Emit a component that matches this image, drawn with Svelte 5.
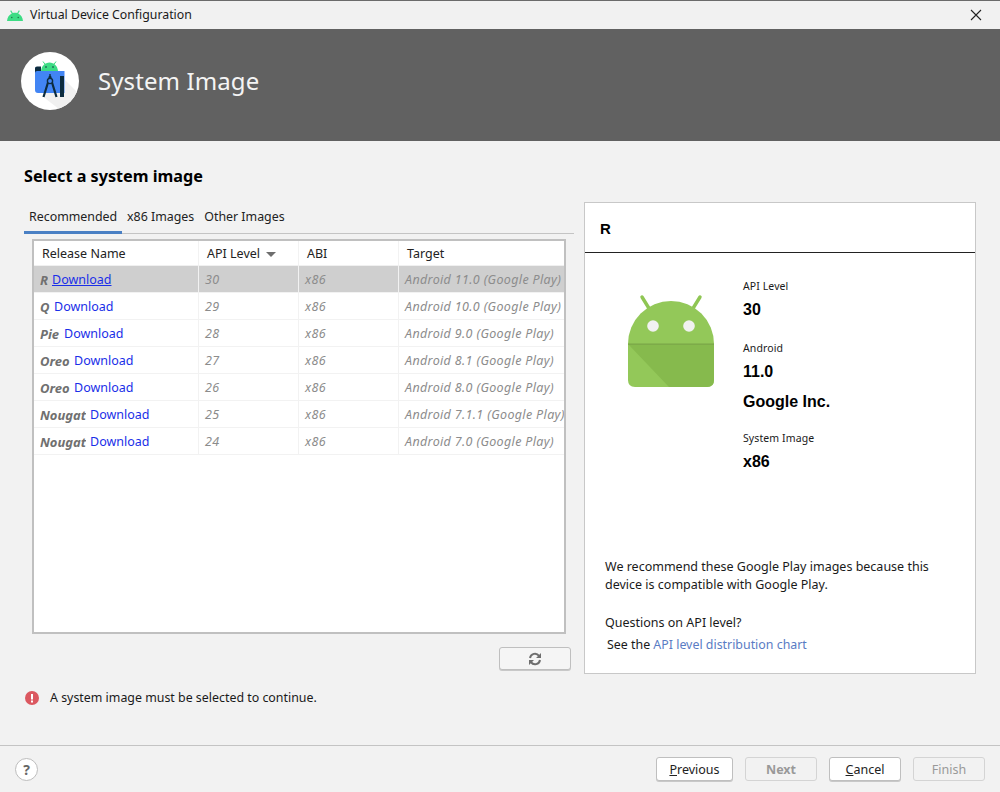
<script>
  const rows = [
    { name: 'R', w: 8, api: 30, target: 'Android 11.0 (Google Play)' },
    { name: 'Q', w: 10, api: 29, target: 'Android 10.0 (Google Play)' },
    { name: 'Pie', w: 20, api: 28, target: 'Android 9.0 (Google Play)' },
    { name: 'Oreo', w: 30, api: 27, target: 'Android 8.1 (Google Play)' },
    { name: 'Oreo', w: 30, api: 26, target: 'Android 8.0 (Google Play)' },
    { name: 'Nougat', w: 46, api: 25, target: 'Android 7.1.1 (Google Play)' },
    { name: 'Nougat', w: 46, api: 24, target: 'Android 7.0 (Google Play)' }
  ];
</script>

<div class="window">
  <header class="titlebar">
    <svg class="title-icon" width="16" height="11" viewBox="0 0 16 11">
      <path d="M0 11C0.300 7.400 2.200 4.700 4.800 3.500L3.200 0.900 4.100 0.300 5.800 3.100C7.200 2.600 8.800 2.600 10.200 3.100L11.900 0.300 12.800 0.900 11.200 3.500C13.800 4.700 15.700 7.400 16 11Z" fill="#3ddc84"/>
      <circle cx="4.800" cy="7.500" r="0.700" fill="#1c6b44"/>
      <circle cx="11.200" cy="7.500" r="0.700" fill="#1c6b44"/>
    </svg>
    <span class="title-text">Virtual Device Configuration</span>
    <svg class="close" width="12" height="12" viewBox="0 0 12 12">
      <path d="M1 1L11 11M11 1L1 11" stroke="#222" stroke-width="1.100" fill="none"/>
    </svg>
  </header>

  <section class="banner">
    <div class="logo">
      <svg width="58" height="58" viewBox="0 0 58 58">
        <path d="M43 27L58 42A29 29 0 0 1 38 57L21 44Z" fill="#f0f0f0"/>
        <path d="M20 19C20.500 14 24 10.500 28.500 10.500S36.500 14 37 19Z" fill="#3ddc84"/>
        <path d="M22 9.500L24.500 13M35 9.500L32.500 13" stroke="#3ddc84" stroke-width="1"/>
        <circle cx="25" cy="15" r="0.800" fill="#0d2c3f"/>
        <circle cx="32" cy="15" r="0.800" fill="#0d2c3f"/>
        <path d="M14 15.500H20V19H43.500V41H17Q14 41 14 38Z" fill="#4285f4"/>
        <path d="M14 16.500Q14 14.500 16 14.500H20V19H16Q14 19 14 21Z" fill="#0d2c3f"/>
        <rect x="39" y="24" width="4" height="21" fill="#0d2c3f"/>
        <path d="M29 24L22.500 45M29 24L35.500 45" stroke="#0d2c3f" stroke-width="2.200" fill="none"/>
        <circle cx="29" cy="29" r="2.600" fill="#4285f4" stroke="#0d2c3f" stroke-width="1.400"/>
        <path d="M29 22V26" stroke="#0d2c3f" stroke-width="1.400"/>
      </svg>
    </div>
    <h1>System Image</h1>
  </section>

  <main class="content">
    <h2>Select a system image</h2>
    <div class="columns">
      <div class="left">
        <div class="tabs">
          <span class="tab active">Recommended</span>
          <span class="tab">x86 Images</span>
          <span class="tab">Other Images</span>
        </div>
        <div class="table">
          <div class="row head">
            <div class="cell">Release Name</div>
            <div class="cell">API Level <i class="sort"></i></div>
            <div class="cell">ABI</div>
            <div class="cell">Target</div>
          </div>
          {#each rows as r, i}
            <div class="row" class:selected={i === 0}>
              <div class="cell name">
                <b class="release" style="width:{r.w}px">{r.name}</b>
                <span class="dl" class:under={i === 0}>Download</span>
              </div>
              <div class="cell em">{r.api}</div>
              <div class="cell em">x86</div>
              <div class="cell em target">{r.target}</div>
            </div>
          {/each}
        </div>
        <div class="refresh-line">
          <button class="btn refresh" aria-label="Refresh">
            <svg width="14" height="14" viewBox="0 0 14 14">
              <path d="M2 6A5 5 0 0 1 11 3.800M12 8A5 5 0 0 1 3 10.200" stroke="#6e6e6e" stroke-width="2" fill="none"/>
              <path d="M13 1V6H8ZM1 13V8H6Z" fill="#6e6e6e"/>
            </svg>
          </button>
        </div>
        <div class="error">
          <svg width="14" height="14" viewBox="0 0 14 14">
            <circle cx="7" cy="7" r="7" fill="#db5860"/>
            <rect x="6" y="3" width="2" height="5.500" fill="#fff"/>
            <rect x="6" y="9.500" width="2" height="2" fill="#fff"/>
          </svg>
          <span>A system image must be selected to continue.</span>
        </div>
      </div>

      <aside class="panel">
        <div class="panel-head">R</div>
        <div class="details">
          <svg class="android" width="87" height="94" viewBox="0 0 87 94">
            <path d="M14 3L22 16M72 3L64 16" stroke="#8fc653" stroke-width="3.400" stroke-linecap="round"/>
            <path d="M0 50A43 43 0 0 1 86 50V86Q86 93 79 93H7Q0 93 0 86Z" fill="#93c859"/>
            <path d="M0 50H86V86Q86 93 79 93H41Z" fill="#86ba4d"/>
            <rect x="0" y="49.500" width="86" height="1.200" fill="#7aa548"/>
            <circle cx="25" cy="32" r="5.800" fill="#f1f1f1"/>
            <circle cx="61" cy="32" r="5.800" fill="#f1f1f1"/>
          </svg>
          <div class="facts">
            <div class="label">API Level</div>
            <div class="value">30</div>
            <div class="label second">Android</div>
            <div class="value">11.0</div>
            <div class="value vendor">Google Inc.</div>
            <div class="label third">System Image</div>
            <div class="value">x86</div>
          </div>
        </div>
        <div class="notes">
          <p>We recommend these Google Play images because this device is compatible with Google Play.</p>
          <p class="q">Questions on API level?</p>
          <p class="see">See the <span class="link">API level distribution chart</span></p>
        </div>
      </aside>
    </div>
  </main>

  <footer class="footer">
    <div class="help">?</div>
    <div class="actions">
      <button class="btn action wide"><u>P</u>revious</button>
      <button class="btn action off bold">Next</button>
      <button class="btn action"><u>C</u>ancel</button>
      <button class="btn action off">Finish</button>
    </div>
  </footer>
</div>

<style>
  :global(body) {
    margin: 0;
    background: #f2f2f2;
  }
  .window {
    width: 1000px;
    height: 792px;
    display: flex;
    flex-direction: column;
    overflow: hidden;
    background: #f2f2f2;
    color: #1a1a1a;
    font: 13px/18px "Noto Sans", "Open Sans", sans-serif;
  }
  .titlebar {
    height: 28px;
    flex: none;
    display: flex;
    align-items: center;
    border-top: 1px solid #6b6b6b;
    padding: 0 18px 0 7px;
    background: #f1f1f1;
  }
  .title-icon { margin-right: 7px; }
  .title-text { font-size: 12.300px; }
  .close { margin-left: auto; }
  .banner {
    height: 112px;
    box-sizing: border-box;
    flex: none;
    background: #616161;
    display: flex;
    align-items: center;
    padding: 0 0 8px 21px;
  }
  .logo {
    width: 58px;
    height: 58px;
    border-radius: 50%;
    background: #fff;
    overflow: hidden;
    margin-right: 19px;
  }
  .logo svg { display: block; }
  h1 {
    margin: 0;
    font-size: 24px;
    font-weight: 400;
    line-height: 32px;
    color: #f4f4f4;
    letter-spacing: 0.100px;
  }
  .content {
    flex: 1;
    padding: 23px 24px 0;
  }
  h2 {
    margin: 0;
    font-size: 16.200px;
    line-height: 24px;
    font-weight: 700;
    color: #000;
  }
  .columns {
    display: flex;
    margin-top: 14px;
  }
  .left { width: 550px; margin-right: 10px; }
  .tabs {
    height: 33px;
    display: flex;
    border-bottom: 1px solid #c4c4c4;
    margin-top: -1px;
    box-sizing: border-box;
    padding-top: 7px;
    font-size: 12.400px;
  }
  .tab {
    padding: 0 5px;
    height: 25px;
    box-sizing: border-box;
    color: #222;
  }
  .tab.active {
    width: 98px;
    border-bottom: 3px solid #4a80c4;
    height: 26px;
    padding-right: 0;
    white-space: nowrap;
  }
  .table {
    width: 534px;
    height: 395px;
    box-sizing: border-box;
    margin: 5px 0 0 8px;
    border: 2px solid #c0c0c0;
    background: #fff;
    overflow: hidden;
  }
  .row {
    display: grid;
    grid-template-columns: 165px 100px 100px 165px;
    height: 27px;
    align-items: stretch;
    box-sizing: border-box;
    border-bottom: 1px solid #f2f2f2;
  }
  .row.head { height: 25px; border-bottom: 1px solid #f0f0f0; }
  .row.selected { background: #cfcfcf; }
  .cell {
    display: flex;
    align-items: center;
    white-space: nowrap;
    overflow: hidden;
    box-sizing: border-box;
    padding: 2px 0 0 6px;
    border-right: 1px solid #f2f2f2;
    font-size: 12.500px;
  }
  .head .cell { padding-left: 8px; color: #222; }
  .row .cell:last-child { border-right: 0; }
  .sort {
    display: inline-block;
    margin-left: 6px;
    border-left: 5px solid transparent;
    border-right: 5px solid transparent;
    border-top: 5px solid #6e6e6e;
  }
  .em {
    font-style: italic;
    color: #8c8c8c;
    letter-spacing: 0.350px;
  }
  .release {
    flex: none;
    overflow: hidden;
    font-style: italic;
    font-weight: 700;
    font-size: 13px;
    color: #707070;
    margin-right: 4px;
  }
  .dl { color: #1a2fe8; }
  .dl.under { text-decoration: underline; }
  .refresh-line {
    display: flex;
    justify-content: flex-end;
    padding: 13px 3px 0 0;
  }
  .btn {
    font: inherit;
    font-size: 12.500px;
    border: 1px solid #bfbfbf;
    border-radius: 3px;
    background: #fff;
    color: #222;
    padding: 0;
    box-sizing: border-box;
    box-shadow: 0 1px 0 #c8c8c8;
  }
  .refresh {
    width: 72px;
    height: 23px;
    background: #f5f5f5;
    display: flex;
    align-items: center;
    justify-content: center;
  }
  .error {
    display: flex;
    align-items: center;
    gap: 11px;
    margin-top: 19px;
    padding-left: 1px;
    font-size: 12.400px;
  }
  .panel {
    width: 392px;
    height: 472px;
    box-sizing: border-box;
    border: 1px solid #c8c8c8;
    background: #fff;
  }
  .panel-head {
    height: 49px;
    border-bottom: 1px solid #222;
    padding: 0 15px;
    line-height: 52px;
    font-family: "Liberation Sans", Arial, sans-serif;
    font-weight: 700;
    font-size: 15px;
    color: #000;
  }
  .details {
    display: flex;
    padding: 25px 0 0 43px;
    height: 290px;
    box-sizing: border-box;
  }
  .android { margin-top: 16px; flex: none; }
  .facts { margin-left: 28px; }
  .label {
    font-size: 10.500px;
    line-height: 16px;
    letter-spacing: 0.100px;
  }
  .second { margin-top: 19px; }
  .third { margin-top: 17px; }
  .value {
    font-family: "Liberation Sans", Arial, sans-serif;
    font-weight: 700;
    font-size: 16px;
    line-height: 22px;
    margin-top: 5px;
    color: #000;
  }
  .vendor { margin-top: 8px; }
  .notes { padding: 15px 20px 0; font-size: 12.500px; }
  p { margin: 0; }
  .q { margin-top: 20px; }
  .see { margin: 4px 0 0 2px; font-size: 12.400px; }
  .link { color: #5a7cc4; }
  .footer {
    height: 47px;
    box-sizing: border-box;
    flex: none;
    display: flex;
    align-items: center;
    border-top: 1px solid #c4c4c4;
    padding: 0 15px;
  }
  .help {
    width: 23px;
    height: 23px;
    box-sizing: border-box;
    border: 1px solid #bdbdbd;
    border-radius: 50%;
    background: #fff;
    color: #666;
    font-weight: 700;
    font-size: 14px;
    line-height: 21px;
    text-align: center;
  }
  .actions {
    margin-left: auto;
    display: flex;
    gap: 12px;
  }
  .action { width: 72px; height: 24px; padding-top: 1px; }
  .wide { width: 77px; }
  .off {
    background: #f2f2f2;
    color: #999;
    border-color: #d4d4d4;
    box-shadow: none;
  }
  .bold { font-weight: 700; }
</style>
